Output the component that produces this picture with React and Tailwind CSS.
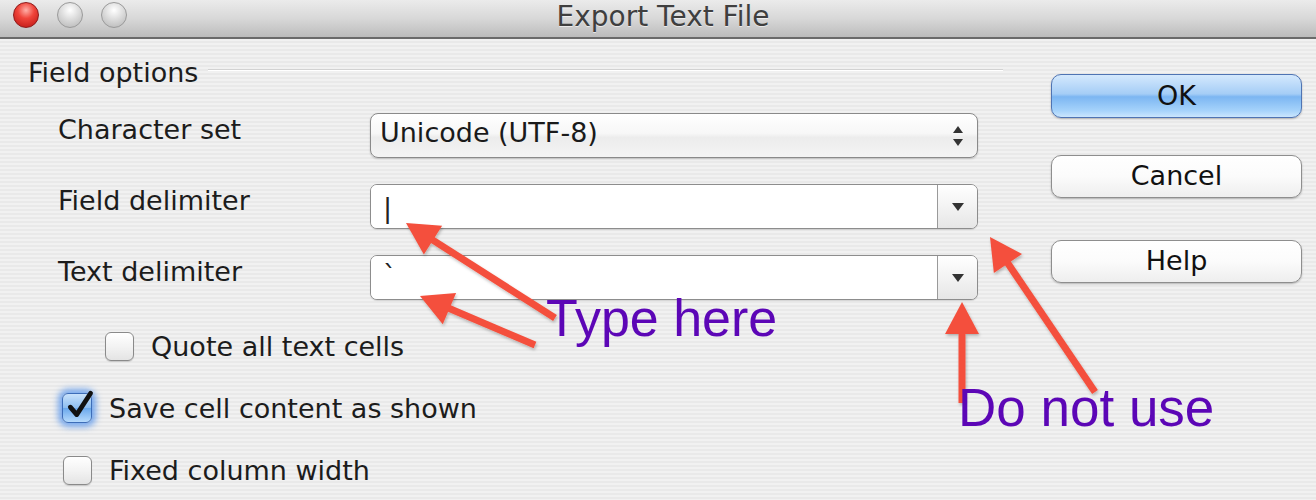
import React from "react";

const ui = { fontFamily: '"DejaVu Sans", "Liberation Sans", sans-serif' };
const ann = { fontFamily: '"Liberation Sans", Arial, sans-serif' };

function Arrow({ x1, y1, x2, y2 }) {
  const dx = x2 - x1, dy = y2 - y1;
  const len = Math.hypot(dx, dy);
  const ux = dx / len, uy = dy / len;
  const L = 32, W = 34;
  const bx = x2 - ux * L, by = y2 - uy * L;
  const px = -uy, py = ux;
  const pts = `${x2},${y2} ${bx + (px * W) / 2},${by + (py * W) / 2} ${bx - (px * W) / 2},${by - (py * W) / 2}`;
  return (
    <g filter="url(#sh)">
      <line x1={x1} y1={y1} x2={bx + ux * 2} y2={by + uy * 2} stroke="#f4503c" strokeWidth="7" />
      <polygon points={pts} fill="#f4503c" />
    </g>
  );
}

function Checkbox({ checked }) {
  if (checked) {
    return (
      <div className="relative w-[30px] h-[30px] rounded-[6px] border border-[#3d6db8] bg-[linear-gradient(180deg,#c9e2fb_0%,#8cbdf0_50%,#6aa8ec_51%,#b6dafc_100%)] shadow-[0_0_6px_4px_rgba(90,150,235,0.8)] flex items-center justify-center">
        <svg width="32" height="32" viewBox="0 0 30 30" className="absolute left-[2px] -top-[5px]">
          <path d="M5 17 L11 24 L24 4" fill="none" stroke="#111" strokeWidth="4.4" strokeLinecap="round" strokeLinejoin="round" />
        </svg>
      </div>
    );
  }
  return (
    <div className="w-[29px] h-[29px] rounded-[6px] border border-[#8a8a8a] bg-[linear-gradient(180deg,#ffffff_0%,#f3f3f3_50%,#e4e4e4_100%)] shadow-[0_1px_1px_rgba(0,0,0,0.15)]" />
  );
}

function Combo({ value, valueClass }) {
  return (
    <div className="w-[608px] h-[45px] flex rounded-[7px] border border-[#8d8d8d] bg-white overflow-hidden shadow-[0_1px_1px_rgba(0,0,0,0.12)]">
      <div className={"flex-1 bg-white border-r border-[#9a9a9a] pl-[12px] text-[27px] text-[#222] leading-none " + valueClass}>{value}</div>
      <div className="w-[39px] flex items-center justify-center bg-[linear-gradient(180deg,#ffffff_0%,#f3f3f3_50%,#e6e6e6_100%)]">
        <svg width="14" height="10" viewBox="0 0 14 10"><path d="M1 1 L13 1 L7 9 Z" fill="#333" /></svg>
      </div>
    </div>
  );
}

function Button({ children, primary, h }) {
  return (
    <div
      className={
        "w-[251px] rounded-[10px] flex items-center justify-center text-[27px] text-[#111] shadow-[0_1px_2px_rgba(0,0,0,0.25)] " +
        (primary
          ? "border border-[#4f74b3] bg-[linear-gradient(180deg,#d4e9fd_0%,#a5cdf6_45%,#7cb6f2_52%,#a6d3fb_85%,#cbe6fd_100%)]"
          : "border border-[#8e8e8e] bg-[linear-gradient(180deg,#ffffff_0%,#fbfbfb_50%,#eeeeee_100%)]")
      }
      style={{ height: h }}
    >
      {children}
    </div>
  );
}

export default function App() {
  return (
    <div className="relative w-[1316px] h-[500px] overflow-hidden text-[#1c1c1c]" style={ui}>
      {/* Title bar */}
      <div className="relative h-[39px] border-b-2 border-[#6a6a6a] bg-[linear-gradient(180deg,#ebebeb_0%,#d8d8d8_50%,#bcbcbc_100%)] flex items-center justify-center">
        <div className="absolute left-[13px] top-[2px] flex gap-[18px]">
          <div className="w-[26px] h-[26px] rounded-full border border-[#8f1a1a] bg-[radial-gradient(circle_at_50%_30%,#ffb0a8_0%,#f0453b_40%,#b8120f_100%)]" />
          <div className="w-[26px] h-[26px] rounded-full border border-[#9a9a9a] bg-[radial-gradient(circle_at_50%_30%,#ffffff_0%,#dcdcdc_45%,#b3b3b3_100%)]" />
          <div className="w-[26px] h-[26px] rounded-full border border-[#9a9a9a] bg-[radial-gradient(circle_at_50%_30%,#ffffff_0%,#dcdcdc_45%,#b3b3b3_100%)]" />
        </div>
        <div className="text-[28px] text-[#3f3f3f] -mt-[4px] ml-[10px] [text-shadow:0_1px_0_rgba(255,255,255,0.6)]">Export Text File</div>
      </div>

      {/* Body */}
      <div className="flex h-[461px] bg-[repeating-linear-gradient(180deg,#f1f1f1_0px,#f1f1f1_2px,#e9e9e9_2px,#e9e9e9_4px)]">
        <div className="w-[1003px] pl-[28px] pt-[15px]">
          <div className="h-[36px] flex items-center">
            <span className="text-[27px] leading-none">Field options</span>
            <div className="flex-1 ml-[10px] -mt-[4px] border-t border-[#d2d2d2] border-b border-b-white" />
          </div>

          <div className="mt-[23px] flex flex-col gap-[26px] pl-[30px]">
            <div className="h-[45px] flex items-center">
              <div className="w-[312px] text-[27px] -mt-[10px]">Character set</div>
              <div className="w-[608px] h-[45px] flex items-center rounded-[8px] border border-[#8a8a8a] bg-[linear-gradient(180deg,#ffffff_0%,#f7f7f7_45%,#ececec_55%,#f4f4f4_100%)] shadow-[0_1px_2px_rgba(0,0,0,0.2)]">
                <div className="flex-1 pl-[9px] text-[27px] text-[#1a1a1a] -mt-[4px]">Unicode (UTF-8)</div>
                <div className="w-[39px] flex justify-center">
                  <svg width="12" height="22" viewBox="0 0 12 22">
                    <path d="M1 8 L6 1 L11 8 Z" fill="#333" />
                    <path d="M1 14 L6 21 L11 14 Z" fill="#333" />
                  </svg>
                </div>
              </div>
            </div>
            <div className="h-[45px] flex items-center">
              <div className="w-[312px] text-[27px] -mt-[10px]">Field delimiter</div>
              <Combo value="|" valueClass="pt-[9px]" />
            </div>
            <div className="h-[45px] flex items-center">
              <div className="w-[312px] text-[27px] -mt-[10px]">Text delimiter</div>
              <Combo value="`" valueClass="pt-[6px]" />
            </div>
          </div>

          <div className="mt-[31px] h-[30px] flex items-center pl-[77px]">
            <Checkbox />
            <span className="ml-[17px] text-[27px] leading-none">Quote all text cells</span>
          </div>
          <div className="mt-[32px] h-[30px] flex items-center pl-[34px]">
            <Checkbox checked />
            <span className="ml-[17px] text-[27px] leading-none">Save cell content as shown</span>
          </div>
          <div className="mt-[32px] h-[30px] flex items-center pl-[35px]">
            <Checkbox />
            <span className="ml-[17px] text-[27px] leading-none">Fixed column width</span>
          </div>
        </div>

        <div className="pl-[48px] pt-[35px] flex flex-col">
          <Button primary h={44}>OK</Button>
          <div className="mt-[37px]"><Button h={43}>Cancel</Button></div>
          <div className="mt-[42px]"><Button h={43}>Help</Button></div>
        </div>
      </div>

      {/* Annotations */}
      <svg className="absolute left-0 top-0 pointer-events-none" width="1316" height="500">
        <defs>
          <filter id="sh" x="-20%" y="-20%" width="140%" height="140%">
            <feDropShadow dx="1" dy="2" stdDeviation="1.5" floodColor="#000" floodOpacity="0.25" />
          </filter>
        </defs>
        <Arrow x1={555} y1={318} x2={406} y2={223} />
        <Arrow x1={535} y1={345} x2={420} y2={296} />
        <Arrow x1={962} y1={403} x2={962} y2={302} />
        <Arrow x1={1095} y1={392} x2={990} y2={237} />
      </svg>
      <div className="absolute left-[546px] top-[292px] text-[52px] leading-none text-[#5c06b6]" style={ann}>Type here</div>
      <div className="absolute left-[958px] top-[381px] text-[53px] leading-none text-[#5c06b6]" style={ann}>Do not use</div>
    </div>
  );
}
